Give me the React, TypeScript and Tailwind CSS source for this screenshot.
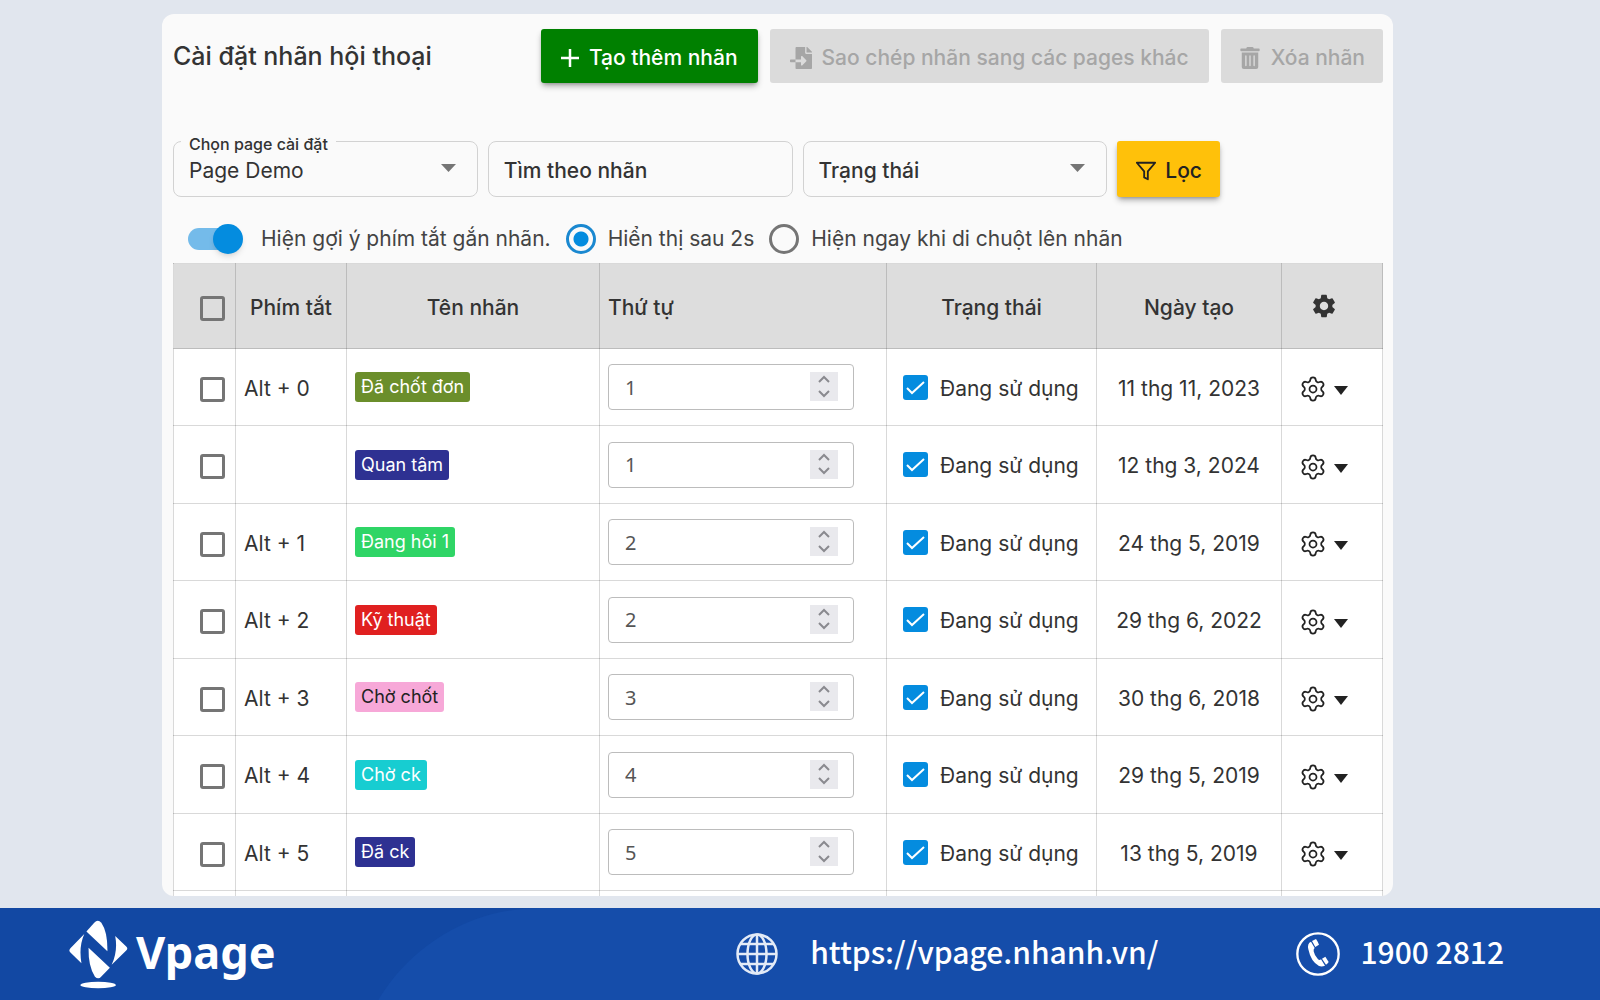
import { useState } from 'react'
import type { ReactNode } from 'react'
import { Settings } from 'lucide-react'
import { FaFileImport, FaTrashAlt } from 'react-icons/fa'
import { FiFilter } from 'react-icons/fi'
import { MdSettings } from 'react-icons/md'

type Label = {
  shortcut: string
  name: string
  color: string
  order: number
  createdAt: string
}

const LABELS: Label[] = [
  { shortcut: 'Alt + 0', name: 'Đã chốt đơn', color: 'bg-[#6b8e2b] text-white', order: 1, createdAt: '11 thg 11, 2023' },
  { shortcut: '', name: 'Quan tâm', color: 'bg-[#2e3192] text-white', order: 1, createdAt: '12 thg 3, 2024' },
  { shortcut: 'Alt + 1', name: 'Đang hỏi 1', color: 'bg-[#2fd566] text-white', order: 2, createdAt: '24 thg 5, 2019' },
  { shortcut: 'Alt + 2', name: 'Kỹ thuật', color: 'bg-[#e02020] text-white', order: 2, createdAt: '29 thg 6, 2022' },
  { shortcut: 'Alt + 3', name: 'Chờ chốt', color: 'bg-[#f7a8d8] text-[#222222]', order: 3, createdAt: '30 thg 6, 2018' },
  { shortcut: 'Alt + 4', name: 'Chờ ck', color: 'bg-[#17cdd1] text-white', order: 4, createdAt: '29 thg 5, 2019' },
  { shortcut: 'Alt + 5', name: 'Đã ck', color: 'bg-[#2e3192] text-white', order: 5, createdAt: '13 thg 5, 2019' },
]

const CELL = 'border border-black/15'
const FIELD = 'h-14 w-full appearance-none rounded-lg border border-[#d2d2d2] px-[15px]'

const Caret = ({ className }: { className: string }) => (
  <svg viewBox="0 0 14 8" className={className} preserveAspectRatio="none" aria-hidden="true">
    <path d="M0 0h14L7 8z" fill="currentColor" />
  </svg>
)

const Field = ({ children }: { children: ReactNode }) => <div className="relative min-w-0 flex-1">{children}</div>

const RowCheckbox = ({ label }: { label: string }) => (
  <input
    type="checkbox"
    aria-label={label}
    className="mt-1 ml-[26px] block size-[25px] appearance-none rounded-[3px] border-3 border-[#757575] checked:bg-[#048cdf]"
  />
)

const Toolbar = () => (
  <header className="flex items-center justify-between gap-3">
    <h1 className="pt-[2px] text-[25px] font-medium text-[#333333]">Cài đặt nhãn hội thoại</h1>
    <div className="flex gap-3 text-[21px] font-medium">
      <button type="button" className="flex h-[54px] items-center gap-[10px] rounded-[3px] bg-[#008000] px-5 pt-1 text-white shadow-md shadow-black/30">
        <svg viewBox="0 0 18 18" className="size-[18px]" stroke="currentColor" strokeWidth="2.5" aria-hidden="true">
          <path d="M9 0v18M0 9h18" />
        </svg>
        Tạo thêm nhãn
      </button>
      <button type="button" disabled className="flex h-[54px] items-center gap-[10px] rounded-[3px] bg-[#dbdbdb] px-5 pt-1 text-[#a6a6a6]">
        <FaFileImport className="size-[22px]" />
        Sao chép nhãn sang các pages khác
      </button>
      <button type="button" disabled className="flex h-[54px] items-center gap-[10px] rounded-[3px] bg-[#dbdbdb] px-[18px] pt-1 text-[#a6a6a6]">
        <FaTrashAlt className="size-[22px]" />
        Xóa nhãn
      </button>
    </div>
  </header>
)

const Filters = () => (
  <form className="mt-[58px] flex gap-[10px] pr-[163px] text-[21px] text-[#333333]">
    <Field>
      <label htmlFor="page" className="absolute -top-[7px] left-2 bg-[#fafafa] px-2 text-base leading-5 font-medium">
        Chọn page cài đặt
      </label>
      <select id="page" className={`${FIELD} pt-[3px]`}>
        <option>Page Demo</option>
      </select>
      <Caret className="pointer-events-none absolute top-[23px] right-[22px] h-2 w-[15px] text-[#757575]" />
    </Field>
    <Field>
      <input type="text" aria-label="Tìm theo nhãn" placeholder="Tìm theo nhãn" className={`${FIELD} pt-[3px] font-medium placeholder:text-[#333333]`} />
    </Field>
    <Field>
      <select aria-label="Trạng thái" className={`${FIELD} pt-[3px] font-medium`}>
        <option>Trạng thái</option>
      </select>
      <Caret className="pointer-events-none absolute top-[23px] right-[22px] h-2 w-[15px] text-[#757575]" />
    </Field>
    <button type="button" className="flex h-14 items-center gap-2 rounded-[3px] bg-[#ffc10a] px-[18px] pt-[3px] font-medium text-[#222222] shadow-md shadow-black/30">
      <FiFilter className="size-[22px]" />
      Lọc
    </button>
  </form>
)

const HintOptions = () => {
  const [enabled, setEnabled] = useState(true)
  const [mode, setMode] = useState('delay')

  return (
    <div className="flex h-[66px] items-center pt-[17px] pl-[14px] text-[21px] text-[#444444]">
      <label className="flex items-center gap-[18px]">
        <span className="relative flex h-[30px] w-[56px] items-center">
          <input
            type="checkbox"
            role="switch"
            checked={enabled}
            onChange={(e) => setEnabled(e.target.checked)}
            className="peer ml-px h-[22px] w-[52px] appearance-none rounded-full bg-[#bdbdbd] checked:bg-[#74bbea]"
          />
          <span className="pointer-events-none absolute left-0 size-[30px] rounded-full bg-white shadow-md peer-checked:left-[26px] peer-checked:bg-[#048cdf]" />
        </span>
        Hiện gợi ý phím tắt gắn nhãn.
      </label>
      <label className="ml-[15px] flex items-center gap-3">
        <input
          type="radio"
          name="mode"
          checked={mode === 'delay'}
          onChange={() => setMode('delay')}
          className="size-[30px] appearance-none rounded-full border-3 border-[#757575] checked:border-[#1a88d0] checked:bg-[radial-gradient(circle,#048cdf_7px,transparent_8px)]"
        />
        Hiển thị sau 2s
      </label>
      <label className="ml-[15px] flex items-center gap-3">
        <input
          type="radio"
          name="mode"
          checked={mode === 'hover'}
          onChange={() => setMode('hover')}
          className="size-[30px] appearance-none rounded-full border-3 border-[#757575] checked:border-[#1a88d0] checked:bg-[radial-gradient(circle,#048cdf_7px,transparent_8px)]"
        />
        Hiện ngay khi di chuột lên nhãn
      </label>
    </div>
  )
}

const OrderInput = ({ label }: { label: Label }) => {
  const [value, setValue] = useState(label.order)

  return (
    <div className="relative mr-8 ml-2">
      <input
        type="number"
        aria-label={`Thứ tự ${label.name}`}
        value={value}
        onChange={(e) => setValue(Number(e.target.value))}
        className="h-[46px] w-full appearance-none rounded border border-[#bcbcbc] bg-white px-4 font-['Noto_Sans',sans-serif] text-xl text-[#555555] [-moz-appearance:textfield] [&::-webkit-inner-spin-button]:appearance-none"
      />
      <span className="absolute top-2 right-4 flex h-[29px] w-7 flex-col bg-[#e9e9ed] text-[#8a8a8f]">
        <button type="button" aria-label="Tăng" onClick={() => setValue(value + 1)} className="flex flex-1 items-center justify-center">
          <svg viewBox="0 0 12 8" className="h-2 w-3" fill="none" stroke="currentColor" strokeWidth="2">
            <path d="M1 7l5-5 5 5" />
          </svg>
        </button>
        <button type="button" aria-label="Giảm" onClick={() => setValue(value - 1)} className="flex flex-1 items-center justify-center">
          <svg viewBox="0 0 12 8" className="h-2 w-3" fill="none" stroke="currentColor" strokeWidth="2">
            <path d="M1 1l5 5 5-5" />
          </svg>
        </button>
      </span>
    </div>
  )
}

const StatusToggle = () => (
  <label className="flex items-center gap-3 pl-4">
    <span className="relative size-[25px] shrink-0">
      <input type="checkbox" defaultChecked className="peer block size-full appearance-none rounded-[3px] border-3 border-[#757575] checked:border-0 checked:bg-[#048cdf]" />
      <svg viewBox="0 0 25 25" className="pointer-events-none absolute inset-0 hidden size-full peer-checked:block" fill="none" stroke="white" strokeWidth="2">
        <path d="M4 13l5 5L21 7" />
      </svg>
    </span>
    <span className="pt-[3px]">Đang sử dụng</span>
  </label>
)

const LabelRow = ({ label }: { label: Label }) => (
  <tr className="h-[77px] even:h-[78px]">
    <td className={CELL}>
      <RowCheckbox label={`Chọn ${label.name}`} />
    </td>
    <td className={`${CELL} pt-[3px] pl-2`}>{label.shortcut}</td>
    <td className={`${CELL} pb-[2px] pl-2`}>
      <span className={`inline-block rounded-[3px] px-[6px] text-[18px] leading-[30px] ${label.color}`}>{label.name}</span>
    </td>
    <td className={CELL}>
      <OrderInput label={label} />
    </td>
    <td className={CELL}>
      <StatusToggle />
    </td>
    <td className={`${CELL} pt-[3px] text-center`}>{label.createdAt}</td>
    <td className={CELL}>
      <button type="button" aria-label={`Tùy chọn ${label.name}`} className="mt-1 ml-[17px] flex items-center gap-[7px] text-[#222222]">
        <Settings size={28} strokeWidth={1.5} />
        <Caret className="mt-[3px] h-[9px] w-[14px]" />
      </button>
    </td>
  </tr>
)

const LabelsTable = () => (
  <table className="w-full table-fixed border-collapse bg-white text-[21px] text-[#333333]">
    <colgroup>
      <col className="w-[62px]" />
      <col className="w-[111px]" />
      <col className="w-[253px]" />
      <col />
      <col className="w-[210px]" />
      <col className="w-[185px]" />
      <col className="w-[101px]" />
    </colgroup>
    <thead className="bg-[#dddddd]">
      <tr className="h-[85px]">
        <th className={CELL}>
          <RowCheckbox label="Chọn tất cả" />
        </th>
        <th className={`${CELL} pt-[3px] font-medium`}>Phím tắt</th>
        <th className={`${CELL} pt-[3px] font-medium`}>Tên nhãn</th>
        <th className={`${CELL} pt-[3px] pl-2 text-left font-medium`}>Thứ tự</th>
        <th className={`${CELL} pt-[3px] font-medium`}>Trạng thái</th>
        <th className={`${CELL} pt-[3px] font-medium`}>Ngày tạo</th>
        <th className={`${CELL} pr-4`} aria-label="Cài đặt">
          <MdSettings className="mx-auto size-7" />
        </th>
      </tr>
    </thead>
    <tbody>
      {LABELS.map((label) => (
        <LabelRow key={label.name} label={label} />
      ))}
      <tr className="h-[78px]">
        {[...Array(7)].map((_, i) => (
          <td key={i} className={CELL}></td>
        ))}
      </tr>
    </tbody>
  </table>
)

const Logo = () => (
  <svg viewBox="194 88 166 208" preserveAspectRatio="none" className="h-[69px] w-[59px]" fill="white" aria-hidden="true">
    <path d="M243 123l22-27q10-11 20 0 18 28 17 86z" />
    <path d="M249 172l60 60-24 26q-8 11-18 1-19-30-18-87z" />
    <path d="M237 130l-39 43q-6 7 0 13l31 32q-8-50 8-88z" />
    <path d="M324 136l31 32q6 6 0 12l-41 43q18-40 10-87z" />
    <ellipse cx="276" cy="284" rx="50" ry="10" />
  </svg>
)

const Footer = () => (
  <footer className="relative h-[92px] shrink-0 overflow-hidden bg-[#1248a3] text-white">
    <div className="absolute top-0 right-0 left-[352px] h-96 rounded-tl-[188px] bg-[#154daa]" />
    <div className="relative flex h-full items-center pr-[96px] pl-[69px] font-['Noto_Sans_CJK_SC',sans-serif] text-[30px] font-medium">
      <div className="flex items-center gap-2">
        <Logo />
        <span className="pb-1 font-['Noto_Sans',sans-serif] text-[45px] font-bold">Vpage</span>
      </div>
      <a href="https://vpage.nhanh.vn/" className="ml-auto flex items-center gap-8">
        <svg viewBox="0 0 42 42" className="size-[42px]" fill="none" stroke="#e3ebf7" strokeWidth="2.5" aria-hidden="true">
          <circle cx="21" cy="21" r="19.5" />
          <ellipse cx="21" cy="21" rx="9.5" ry="19.5" />
          <path d="M21 1v40M1 21h40M4 11h34M4 31h34" />
        </svg>
        <span className="pb-[6px]">https://vpage.nhanh.vn/</span>
      </a>
      <a href="tel:19002812" className="ml-[138px] flex items-center gap-5">
        <svg viewBox="11 18 132 132" className="size-11" fill="white" aria-hidden="true">
          <circle cx="77" cy="84" r="62" fill="none" stroke="white" strokeWidth="7" />
          <path d="M56 47q-12 5-8 23 8 38 32 50 8 3 18-1l-12-19q-4 4-9 0-11-12-13-24-1-8 3-10z" />
          <path d="M59 45l12-6q5 7 9 17l-11 7z" />
          <path d="M89 98l10-6 10 16q-3 5-8 8z" />
        </svg>
        <span className="pb-[6px]">1900 2812</span>
      </a>
    </div>
  </footer>
)

export default function App() {
  return (
    <div className="flex h-screen flex-col bg-[#e1e6ee] font-['Inter',sans-serif]">
      <main className="mb-3 min-h-0 flex-1 pt-[14px] pr-[207px] pl-[162px]">
        <section className="h-full overflow-hidden rounded-xl bg-[#fafafa] pt-[15px] pr-[10px] pl-[11px]">
          <Toolbar />
          <Filters />
          <HintOptions />
          <LabelsTable />
        </section>
      </main>
      <Footer />
    </div>
  )
}
